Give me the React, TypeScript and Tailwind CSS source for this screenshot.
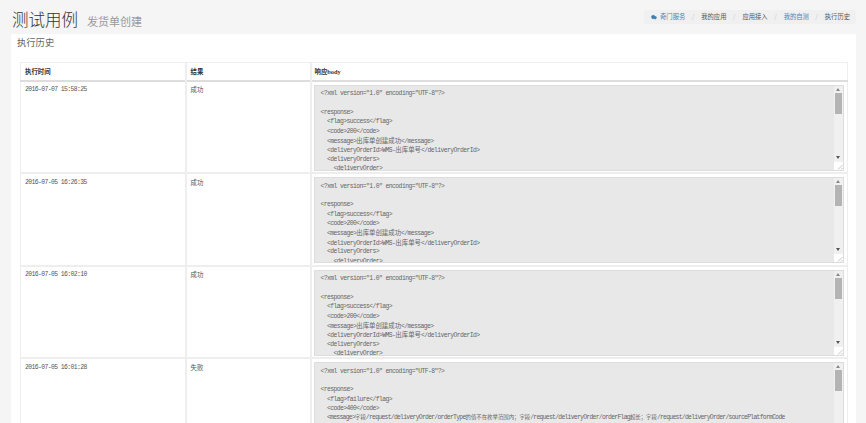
import { Cloud } from 'lucide-react'

interface HistoryRow {
  time: string
  result: string
  flag: string
  code: string
  message: 'ok' | 'fail'
}

const rows: HistoryRow[] = [
  { time: '2016-07-07 15:58:25', result: '成功', flag: 'success', code: '200', message: 'ok' },
  { time: '2016-07-05 16:26:35', result: '成功', flag: 'success', code: '200', message: 'ok' },
  { time: '2016-07-05 16:02:10', result: '成功', flag: 'success', code: '200', message: 'ok' },
  { time: '2016-07-05 16:01:28', result: '失败', flag: 'failure', code: '400', message: 'fail' },
]

// latin stays in the mono stack, chinese is set at its own size
function Zh({ children }: { children: string }) {
  return <span className="text-[6.4px] tracking-normal font-['Noto_Sans_CJK_SC',sans-serif]">{children}</span>
}

function ZhSmall({ children }: { children: string }) {
  return <span className="text-[5.4px] tracking-normal font-['Noto_Sans_CJK_SC',sans-serif]">{children}</span>
}

function Line({ indent = 0, children }: { indent?: number; children?: React.ReactNode }) {
  return (
    <div className="h-[9.4px] leading-[9.4px] whitespace-nowrap" style={{ paddingLeft: indent * 6.5 }}>
      {children}
    </div>
  )
}

function Scrollbar() {
  return (
    <div className="flex w-[9px] shrink-0 flex-col items-center bg-[#f0f0f0]">
      <div className="mt-[2px] h-0 w-0 border-x-[2px] border-b-[3px] border-x-transparent border-b-[#888]" />
      <div className="mt-[2px] h-[21px] w-[7px] bg-[#b4b4b4]" />
      <div className="flex-1" />
      <div className="mb-[3px] h-0 w-0 border-x-[2px] border-t-[3px] border-x-transparent border-t-[#555]" />
      <div className="h-[8px] w-[9px] bg-white">
        <svg viewBox="0 0 9 8" className="h-full w-full">
          <path d="M4 7.5 8.5 3M7 7.5 8.5 6" stroke="#aaa" strokeWidth="0.7" />
        </svg>
      </div>
    </div>
  )
}

function XmlBox({ row }: { row: HistoryRow }) {
  return (
    <div className="flex h-[86px] w-[530px] border border-[#ddd] bg-[#e8e8e8]">
      <div className="flex-1 overflow-hidden pl-[6px] pt-[3.5px] font-['Liberation_Mono',monospace] text-[6.4px] tracking-[-0.58px] text-[#666]">
        <Line>{'<?xml version="1.0" encoding="UTF-8"?>'}</Line>
        <Line />
        <Line>{'<response>'}</Line>
        <Line indent={1}>{`<flag>${row.flag}</flag>`}</Line>
        <Line indent={1}>{`<code>${row.code}</code>`}</Line>
        {row.message === 'ok' ? (
          <>
            <Line indent={1}>
              {'<message>'}
              <Zh>出库单创建成功</Zh>
              {'</message>'}
            </Line>
            <Line indent={1}>
              {'<deliveryOrderId>WMS-'}
              <Zh>出库单号</Zh>
              {'</deliveryOrderId>'}
            </Line>
            <Line indent={1}>{'<deliveryOrders>'}</Line>
            <Line indent={2}>{'<deliveryOrder>'}</Line>
          </>
        ) : (
          <Line indent={1}>
            <span className="tracking-[-0.72px]">
              {'<message>'}
              <ZhSmall>字段</ZhSmall>
              {'/request/deliveryOrder/orderType'}
              <ZhSmall>的值不在枚举范围内；字段</ZhSmall>
              {'/request/deliveryOrder/orderFlag'}
              <ZhSmall>超长；字段</ZhSmall>
              {'/request/deliveryOrder/sourcePlatformCode'}
            </span>
          </Line>
        )}
      </div>
      <Scrollbar />
    </div>
  )
}

export default function App() {
  return (
    <div className="h-[423px] overflow-hidden bg-[#f5f5f5] font-['Noto_Sans_CJK_SC',sans-serif]">
      <div className="flex h-[34px] items-start justify-between pl-[12px] pr-[10px]">
        <div className="mt-[6px] flex items-baseline">
          <h1 className="text-[16.5px] font-light leading-[26px] text-[#333]">测试用例</h1>
          <span className="ml-[9px] text-[11px] text-[#999]">发货单创建</span>
        </div>
        <div className="mt-[10px] flex h-[14px] items-center rounded-[2px] bg-[#f0f0f0] pl-[7px] pr-[6px] text-[6.3px] text-[#555]">
          <Cloud size={6} className="mr-[3px] fill-[#3a7cb0] text-[#3a7cb0]" />
          <span className="text-[#3f86b8]">奇门服务</span>
          <span className="mx-[6.5px] w-[3px] text-[#ccc]">/</span>
          <span>我的应用</span>
          <span className="mx-[6.5px] w-[3px] text-[#ccc]">/</span>
          <span>应用接入</span>
          <span className="mx-[6.5px] w-[3px] text-[#ccc]">/</span>
          <span className="text-[#3f86b8]">我的自测</span>
          <span className="mx-[6.5px] w-[3px] text-[#ccc]">/</span>
          <span>执行历史</span>
        </div>
      </div>

      <main className="ml-[11px] mr-[10px] h-[389px] overflow-hidden bg-white pl-[9px] pr-[8px]">
        <h2 className="-ml-[3px] h-[28px] pt-[1px] text-[9.3px] leading-[14px] text-[#666]">执行历史</h2>
        <table className="w-[828px] table-fixed border-collapse border border-[#eee] text-[6.4px] text-[#555]">
          <colgroup>
            <col className="w-[165px]" />
            <col className="w-[125px]" />
            <col />
          </colgroup>
          <thead>
            <tr className="h-[18px] border-b-2 border-[#ddd] text-left text-[#333]">
              <th className="border-r-2 border-[#eee] pl-[4px] pt-[1px] font-bold">执行时间</th>
              <th className="border-r-2 border-[#eee] pl-[4px] pt-[1px] font-bold">结果</th>
              <th className="pl-[3px] pt-[1px] font-bold">
                响应<span className="font-['Liberation_Serif',serif]">body</span>
              </th>
            </tr>
          </thead>
          <tbody>
            {rows.map(row => (
              <tr key={row.time} className="h-[92.5px] border-b-2 border-[#eee] align-top">
                <td className="border-r-2 border-[#eee] pl-[4px] pt-[3.5px] font-['Liberation_Mono',monospace] text-[6.4px] leading-[9px] tracking-[-0.58px]">
                  {row.time}
                </td>
                <td className="border-r-2 border-[#eee] pl-[4px] pt-[3.5px] leading-[9px]">{row.result}</td>
                <td className="pl-[2px] pt-[3px]">
                  <XmlBox row={row} />
                </td>
              </tr>
            ))}
          </tbody>
        </table>
      </main>
    </div>
  )
}
